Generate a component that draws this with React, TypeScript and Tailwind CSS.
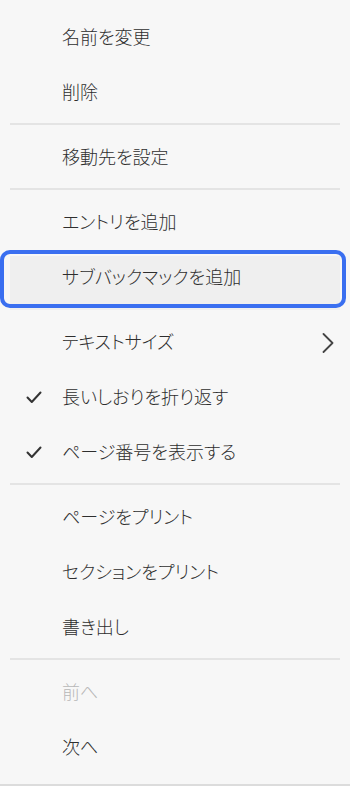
import React from 'react';

type Item = {
  label: string;
  checked?: boolean;
  submenu?: boolean;
  disabled?: boolean;
  focused?: boolean;
};

// Menu groups, separated by dividers
const groups: Item[][] = [
  [{ label: '名前を変更' }, { label: '削除' }],
  [{ label: '移動先を設定' }],
  [
    { label: 'エントリを追加' },
    { label: 'サブバックマックを追加', focused: true },
    { label: 'テキストサイズ', submenu: true },
    { label: '長いしおりを折り返す', checked: true },
    { label: 'ページ番号を表示する', checked: true },
  ],
  [{ label: 'ページをプリント' }, { label: 'セクションをプリント' }, { label: '書き出し' }],
  [{ label: '前へ', disabled: true }, { label: '次へ' }],
];

function CheckIcon() {
  return (
    <svg width="16" height="13" viewBox="0 0 16 13" fill="none">
      <path d="M1.5 6.5 L5.8 11 L14.5 1.5" stroke="#333" strokeWidth="2" strokeLinecap="round" strokeLinejoin="round" />
    </svg>
  );
}

function ChevronIcon() {
  return (
    <svg width="12" height="20" viewBox="0 0 12 20" fill="none">
      <path d="M1.5 1 L10.5 10 L1.5 19" stroke="#444" strokeWidth="1.8" strokeLinecap="round" strokeLinejoin="round" />
    </svg>
  );
}

function MenuRow({ item }: { item: Item }) {
  return (
    <div className={`relative h-[55px] ${item.focused ? 'mb-[10px]' : ''}`}>
      {item.focused && (
        <>
          <div className="absolute left-[10px] right-[10px] top-[6px] bottom-[-5px] bg-[#efefef]" />
          <div className="absolute left-0 right-[4px] top-0 bottom-[-3px] rounded-[10px] border-[4px] border-[#3a6ff0]" />
        </>
      )}
      <div className="relative flex h-full items-center">
        <div className="flex w-[62px] justify-start pl-[26px]">{item.checked && <CheckIcon />}</div>
        <span
          className={`flex-1 -translate-y-[2px] text-[18px] font-light leading-none [font-feature-settings:'palt'] ${
            item.disabled ? 'text-[#b8b8b8]' : 'text-[#2e2e2e]'
          }`}
        >
          {item.label}
        </span>
        {item.submenu && (
          <div className="pr-[16px]">
            <ChevronIcon />
          </div>
        )}
      </div>
    </div>
  );
}

export default function App() {
  return (
    <div
      className="w-[350px] h-[786px] overflow-hidden bg-[#f7f7f7]"
      style={{ fontFamily: '"Noto Sans CJK JP", "Noto Sans", sans-serif' }}
    >
      <div className="flex h-full flex-col pt-[10px] pb-[9px] border-b-2 border-[#dcdcdc] box-border">
        {groups.map((group, gi) => (
          <div key={gi}>
            {gi > 0 && <div className="mx-[10px] mt-[3px] mb-[5px] h-[2px] bg-[#e4e4e4]" />}
            {group.map((item) => (
              <MenuRow key={item.label} item={item} />
            ))}
          </div>
        ))}
      </div>
    </div>
  );
}
